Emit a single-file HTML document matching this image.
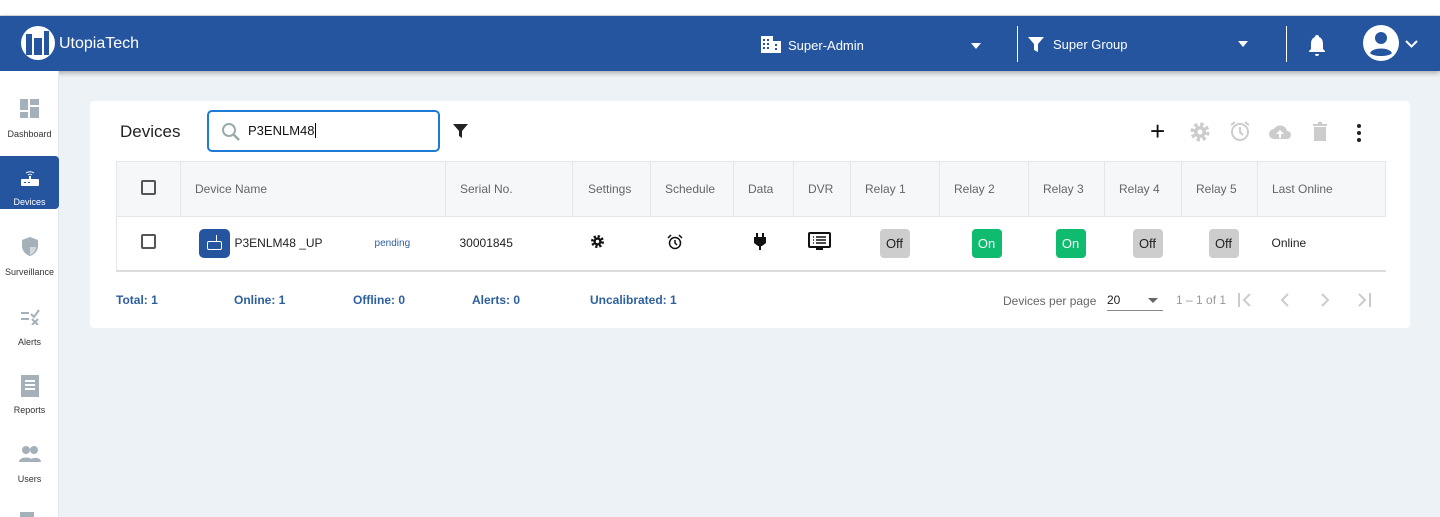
<!DOCTYPE html>
<html><head><style>
*{margin:0;padding:0;box-sizing:border-box}
body{width:1440px;height:517px;overflow:hidden;background:#edf2f6;font-family:"Liberation Sans",sans-serif;position:relative}
.a{position:absolute}
.top{left:0;top:0;width:1440px;height:16px;background:#fff;border-bottom:1px solid #ddd}
.hdr{left:0;top:16px;width:1440px;height:55px;background:#2655a0;box-shadow:0 2px 5px rgba(0,0,0,.3);color:#fff}
.side{left:0;top:71px;width:59px;height:446px;background:#fff;border-right:1px solid #e3e6ea}
.si{position:absolute;left:0;width:59px;text-align:center;font-size:9px;color:#333}
.card{left:90px;top:101px;width:1320px;height:227px;background:#fff;border-radius:4px}
table{position:absolute;left:116px;top:161px;border-collapse:collapse;font-size:12px}
td{border:1px solid #e3e6ea;padding:0 14px;color:#666;height:55px;white-space:nowrap}
tr.b td{color:#222;height:54px;border-left:none;border-right:none}
tr.b{border-bottom:2px solid #ddd}
tr.h td{background:#f5f7f9;border-left:none;border-right:1px solid #e3e6ea}
.cb{width:15px;height:15px;border:2px solid #555;border-radius:2px;display:inline-block}
.btn{display:inline-block;width:30px;height:29px;line-height:29px;border-radius:4px;text-align:center;font-size:13px;background:#cdcdcd;color:#222}
.on{background:#0fbb6e;color:#fff}
.ft{top:293px;font-size:12px;font-weight:bold;color:#2d5f9e}
</style></head><body>
<div class="a top"></div>
<div class="a hdr">
 <svg class="a" style="left:20px;top:9px" width="36" height="36" viewBox="0 0 36 36"><circle cx="18" cy="18" r="17" fill="#fff"/><path d="M6 9h6v21H6zM14 13h8v17h-8zM24 6h5v24h-5z" fill="#2655a0"/></svg>
 <div class="a" style="left:59px;top:19px;font-size:16px">UtopiaTech</div>
 <svg class="a" style="left:761px;top:20px" width="20" height="17" viewBox="0 0 20 17"><path d="M0 0h12v17H0zM12 5h8v12h-8z" fill="#fff"/><g fill="#2655a0"><rect x="2" y="3" width="2" height="2"/><rect x="6" y="3" width="2" height="2"/><rect x="2" y="7" width="2" height="2"/><rect x="6" y="7" width="2" height="2"/><rect x="2" y="11" width="2" height="2"/><rect x="6" y="11" width="2" height="2"/><rect x="14" y="8" width="2" height="2"/><rect x="14" y="12" width="2" height="2"/></g></svg>
 <div class="a" style="left:788px;top:22px;font-size:13px">Super-Admin</div>
 <div class="a" style="left:971px;top:27px;border:5px solid transparent;border-top:6px solid #fff"></div>
 <div class="a" style="left:1017px;top:10px;width:1px;height:36px;background:#fff"></div>
 <svg class="a" style="left:1028px;top:21px" width="16" height="15"><path d="M0 0h16L10 7v8L6 13V7z" fill="#fff"/></svg>
 <div class="a" style="left:1053px;top:21px;font-size:13px">Super Group</div>
 <div class="a" style="left:1238px;top:25px;border:5px solid transparent;border-top:6px solid #fff"></div>
 <div class="a" style="left:1286px;top:10px;width:1px;height:36px;background:#fff"></div>
 <svg class="a" style="left:1308px;top:18px" width="18" height="22" viewBox="0 0 18 22"><path d="M9 1a2 2 0 0 1 2 2c3 1 4 4 4 7v5l2 2v1H1v-1l2-2v-5c0-3 1-6 4-7a2 2 0 0 1 2-2zM7 20h4a2 2 0 0 1-4 0z" fill="#fff"/></svg>
 <svg class="a" style="left:1363px;top:8px" width="36" height="38" viewBox="0 0 36 38"><circle cx="18" cy="19" r="18" fill="#fff"/><circle cx="18" cy="14" r="6" fill="#2655a0"/><path d="M7 29c3-6 19-6 22 0c-3 4-19 4-22 0z" fill="#2655a0"/></svg>
 <svg class="a" style="left:1405px;top:24px" width="13" height="9"><path d="M1 1l5.5 5.5L12 1" stroke="#fff" stroke-width="2" fill="none"/></svg>
</div>
<div class="a side">
 <div class="si" style="top:28px"><svg width="20" height="20"><rect x="0" y="0" width="8" height="11" fill="#a4b0ba"/><rect x="10" y="0" width="9" height="6" fill="#a4b0ba"/><rect x="0" y="13" width="8" height="6" fill="#a4b0ba"/><rect x="10" y="8" width="9" height="11" fill="#a4b0ba"/></svg><div style="margin-top:8px">Dashboard</div></div>
 <div class="a" style="left:0;top:85px;width:59px;height:53px;background:#2655a0;border-radius:0 4px 4px 0"></div>
 <div class="si" style="top:98px;color:#fff"><svg width="20" height="18"><path d="M6 4a7 7 0 0 1 8 0M8 6a3 3 0 0 1 4 0" stroke="#fff" fill="none"/><rect x="9" y="7" width="2" height="4" fill="#fff"/><rect x="1" y="10" width="18" height="7" rx="1" fill="#fff"/><g fill="#2655a0"><rect x="4" y="13" width="2" height="1"/><rect x="8" y="13" width="2" height="1"/></g></svg><div style="margin-top:8px">Devices</div></div>
 <div class="si" style="top:165px"><svg width="18" height="21"><path d="M9 1l8 3v6c0 5-4 9-8 10c-4-1-8-5-8-10V4z" fill="#a4b0ba"/><path d="M9 3v8H15c0 4-3 7-6 8z" fill="#fff" opacity=".5"/></svg><div style="margin-top:8px">Surveillance</div></div>
 <div class="si" style="top:238px"><svg width="20" height="16"><path d="M1 4h8M1 10h8M11 5l3 3 5-7M12 10l6 6M18 10l-6 6" stroke="#a4b0ba" stroke-width="2" fill="none"/></svg><div style="margin-top:10px">Alerts</div></div>
 <div class="si" style="top:304px"><svg width="18" height="22"><rect x="0" y="0" width="18" height="22" fill="#a4b0ba"/><path d="M4 6h10M4 10h10M4 14h10" stroke="#fff" stroke-width="2"/></svg><div style="margin-top:6px">Reports</div></div>
 <div class="si" style="top:375px"><svg width="22" height="16"><circle cx="7" cy="4" r="4" fill="#a4b0ba"/><circle cx="15" cy="4" r="4" fill="#a4b0ba"/><path d="M0 16c0-6 14-6 14 0zM10 16c0-5 12-6 12 0z" fill="#a4b0ba"/></svg><div style="margin-top:10px">Users</div></div>
 <div class="a" style="left:20px;top:441px;width:14px;height:5px;background:#a4b0ba"></div>
</div>
<div class="a card"></div>
<div class="a" style="left:120px;top:122px;font-size:17px;color:#222">Devices</div>
<div class="a" style="left:207px;top:110px;width:233px;height:42px;border:2px solid #1e7ad6;border-radius:5px"></div>
<svg class="a" style="left:221px;top:122px" width="20" height="20"><circle cx="8" cy="8" r="6" stroke="#9aa" stroke-width="2" fill="none"/><path d="M12 12l6 6" stroke="#9aa" stroke-width="2.5"/></svg>
<div class="a" style="left:248px;top:123px;font-size:13px;color:#111">P3ENLM48<span style="border-left:1px solid #000;margin-left:1px"></span></div>
<svg class="a" style="left:453px;top:124px" width="15" height="14"><path d="M0 0h15L9 7v7L6 12V7z" fill="#222"/></svg>
<div class="a" style="left:1150px;top:116px;font-size:26px;color:#111;font-weight:300">+</div>
<svg class="a" style="left:1189px;top:121px" width="22" height="22" viewBox="0 0 22 22"><circle cx="11" cy="11" r="7" fill="none" stroke="#ccc" stroke-width="5" stroke-dasharray="3 2.5"/><circle cx="11" cy="11" r="6" fill="#ccc"/><circle cx="11" cy="11" r="2.5" fill="#fff"/></svg>
<svg class="a" style="left:1229px;top:120px" width="22" height="22"><circle cx="11" cy="12" r="8" stroke="#ccc" stroke-width="2" fill="none"/><path d="M11 7v5l3 3M2 5l4-3M20 5l-4-3" stroke="#ccc" stroke-width="2" fill="none"/></svg>
<svg class="a" style="left:1268px;top:123px" width="24" height="16"><path d="M6 16a5 5 0 0 1 0-10a7 7 0 0 1 13 2a4 4 0 0 1 0 8z" fill="#ccc"/><path d="M12 7l-4 4h3v4h2v-4h3z" fill="#fff"/></svg>
<svg class="a" style="left:1313px;top:122px" width="14" height="19"><rect x="0" y="2" width="14" height="2" fill="#ccc"/><rect x="5" y="0" width="4" height="2" fill="#ccc"/><rect x="1" y="5" width="12" height="14" fill="#ccc"/></svg>
<svg class="a" style="left:1356px;top:124px" width="6" height="18"><circle cx="3" cy="2" r="2" fill="#222"/><circle cx="3" cy="9" r="2" fill="#222"/><circle cx="3" cy="16" r="2" fill="#222"/></svg>
<table>
<tr class="h"><td style="width:64px;text-align:center;border-left:1px solid #e3e6ea"><span class="cb"></span></td><td style="width:265px">Device Name</td><td style="width:127px">Serial No.</td><td style="width:78px;padding:0 15px">Settings</td><td style="width:83px">Schedule</td><td style="width:60px">Data</td><td style="width:57px">DVR</td><td style="width:89px">Relay 1</td><td style="width:89px">Relay 2</td><td style="width:76px">Relay 3</td><td style="width:77px">Relay 4</td><td style="width:76px">Relay 5</td><td style="width:128px">Last Online</td></tr>
<tr class="b"><td style="text-align:center;border-left:1px solid #e3e6ea"><span class="cb"></span></td><td style="padding-left:18px"><span style="display:inline-block;width:31px;height:29px;background:#2655a0;border-radius:5px;vertical-align:middle;position:relative"><span style="position:absolute;left:8px;top:12px;width:15px;height:9px;border:1.5px solid #fff;border-radius:2px"></span><span style="position:absolute;left:17px;top:6px;width:1.5px;height:6px;background:#fff"></span></span><span style="margin-left:5px;vertical-align:middle">P3ENLM48 _UP</span><span style="margin-left:52px;font-size:10px;color:#2d5f9e;vertical-align:middle">pending</span></td><td>30001845</td><td style="padding-left:17px"><svg width="15" height="15" viewBox="0 0 22 22"><circle cx="11" cy="11" r="7" fill="none" stroke="#111" stroke-width="5" stroke-dasharray="3 2.5"/><circle cx="11" cy="11" r="6" fill="#111"/><circle cx="11" cy="11" r="2.5" fill="#fff"/></svg></td><td style="padding-left:16px"><svg width="16" height="16"><circle cx="8" cy="9" r="5.5" stroke="#111" stroke-width="1.5" fill="none"/><path d="M8 6v3l2 2M1 4l3-3M15 4l-3-3" stroke="#111" stroke-width="1.5" fill="none"/></svg></td><td style="padding-left:20px"><svg width="12" height="17"><path d="M3 0v4M9 0v4" stroke="#111" stroke-width="2"/><path d="M0 4h12v6l-4 3H4L0 10z" fill="#111"/><rect x="5" y="12" width="2" height="5" fill="#111"/></svg></td><td><svg width="23" height="19"><rect x="1" y="1" width="21" height="14" rx="1" stroke="#111" stroke-width="2" fill="none"/><path d="M5 5h1M8 5h10M5 8h1M8 8h10M5 11h1M8 11h10" stroke="#111" stroke-width="1.5"/><rect x="8" y="15" width="7" height="3" fill="#111"/></svg></td><td style="padding-left:29px"><span class="btn">Off</span></td><td style="padding-left:32px"><span class="btn on">On</span></td><td style="padding-left:27px"><span class="btn on">On</span></td><td style="padding-left:28px"><span class="btn">Off</span></td><td style="padding-left:27px"><span class="btn">Off</span></td><td>Online</td></tr>
</table>
<div class="a ft" style="left:116px">Total: 1</div>
<div class="a ft" style="left:234px">Online: 1</div>
<div class="a ft" style="left:353px">Offline: 0</div>
<div class="a ft" style="left:472px">Alerts: 0</div>
<div class="a ft" style="left:590px">Uncalibrated: 1</div>
<div class="a" style="left:1003px;top:294px;font-size:12px;color:#666">Devices per page</div>
<div class="a" style="left:1107px;top:293px;width:56px;height:18px;border-bottom:1px solid #888;font-size:12px;color:#222">20</div>
<div class="a" style="left:1148px;top:298px;border:5px solid transparent;border-top:5px solid #666"></div>
<div class="a" style="left:1176px;top:293px;font-size:12px;color:#999">1 – 1 of 1</div>
<svg class="a" style="left:1236px;top:291px" width="140" height="18"><path d="M3 2v14M14 3l-6 6 6 6M52 3l-6 6 6 6M86 3l6 6-6 6M123 3l6 6-6 6M134 2v14" stroke="#ccc" stroke-width="2" fill="none"/></svg>
</body></html>
